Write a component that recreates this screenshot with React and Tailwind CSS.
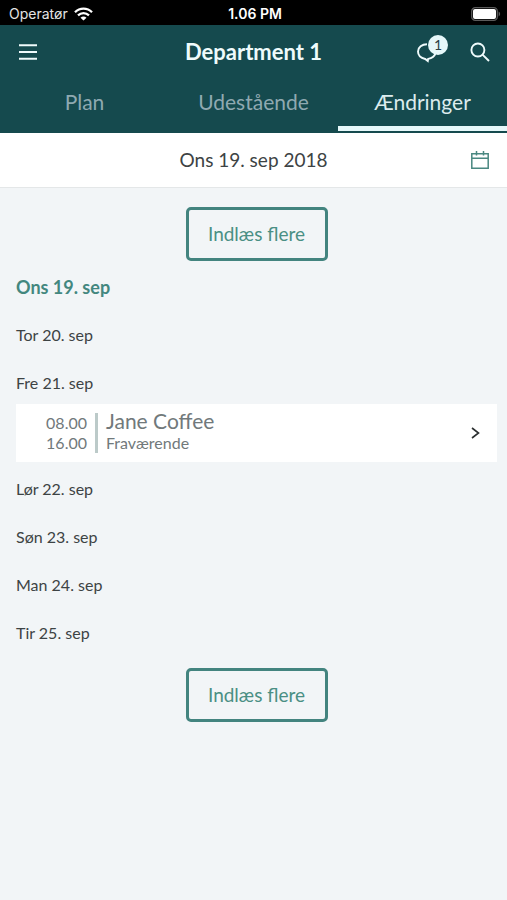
import React from "react";

const days = [
  { label: "Ons 19. sep", current: true },
  { label: "Tor 20. sep" },
  {
    label: "Fre 21. sep",
    shifts: [{ from: "08.00", to: "16.00", name: "Jane Coffee", status: "Fraværende" }],
  },
  { label: "Lør 22. sep" },
  { label: "Søn 23. sep" },
  { label: "Man 24. sep" },
  { label: "Tir 25. sep" },
];

const tabs = [{ label: "Plan" }, { label: "Udestående" }, { label: "Ændringer", active: true }];

function WifiIcon() {
  return (
    <svg width="19" height="14" viewBox="0 0 19 14" fill="none" stroke="#fff" strokeWidth="2.3" aria-hidden="true">
      <path d="M1 5.2C5.8.4 13.2.4 18 5.2" />
      <path d="M4 8.4c3.2-3 7.8-3 11 0" />
      <path d="M9.5 13.6 6.5 10.7c1.7-1.5 4.3-1.5 6 0Z" fill="#fff" stroke="none" />
    </svg>
  );
}

function BatteryIcon() {
  return (
    <svg width="30" height="14" viewBox="0 0 30 14" aria-hidden="true">
      <rect x="0.7" y="0.7" width="25.6" height="12.6" rx="3.6" fill="none" stroke="#5b5b5b" strokeWidth="1.3" />
      <rect x="2" y="2" width="23" height="10" rx="2" fill="#fff" />
      <path d="M27.6 4.6c2 .8 2 4 0 4.8Z" fill="#5b5b5b" />
    </svg>
  );
}

function StatusBar() {
  return (
    <div className="grid h-[25px] grid-cols-3 items-center bg-black pt-[2px] pr-[6px] pl-[9px] font-['Inter','Liberation_Sans',sans-serif] text-[14px] leading-5 text-white">
      <div className="flex items-center gap-[6px]">
        <span className="text-[#e4e4e4]">Operatør</span>
        <WifiIcon />
      </div>
      <span className="text-center font-semibold">1.06 PM</span>
      <span className="flex justify-end">
        <BatteryIcon />
      </span>
    </div>
  );
}

function LoadMore() {
  return (
    <button
      type="button"
      className="mx-auto block h-[54px] w-[142px] rounded-[5px] border-[3px] border-[#43847f] text-[19px] leading-6 text-[#4a8f84]"
    >
      Indlæs flere
    </button>
  );
}

function Shift({ shift }) {
  return (
    <button type="button" className="flex h-[58px] w-full items-center bg-white pr-4 text-left text-[#71797b]">
      <span className="w-[71px] text-right text-[16px] leading-5">
        <span className="block">{shift.from}</span>
        <span className="block">{shift.to}</span>
      </span>
      <span className="ml-2 h-10 w-[3px] bg-[#bccac9]" />
      <span className="ml-2 flex-1 pb-1">
        <span className="block text-[21px] leading-6">{shift.name}</span>
        <span className="block text-[16px] leading-5">{shift.status}</span>
      </span>
      <svg width="11" height="14" viewBox="0 0 11 14" fill="none" stroke="#2b2f30" strokeWidth="1.6" aria-hidden="true">
        <path d="M2 2l6.5 5L2 12" />
      </svg>
    </button>
  );
}

export default function App() {
  return (
    <div className="min-h-screen bg-[#f2f5f7] font-['Lato','Noto_Sans',sans-serif] text-[#3d4344]">
      <StatusBar />
      <header className="bg-[#154a4e] text-[#effbfc]">
        <div className="grid h-[53px] grid-cols-[1fr_auto_1fr] items-center px-[17px]">
          <button type="button" aria-label="Menu" className="justify-self-start">
            <svg width="22" height="18" viewBox="0 0 22 18" stroke="currentColor" strokeWidth="2.1" aria-hidden="true">
              <path d="M2 2.2h18M2 9h18M2 15.8h18" />
            </svg>
          </button>
          <h1 className="text-[22px] leading-7 font-bold">Department 1</h1>
          <div className="flex items-center justify-end gap-[22px]">
            <button type="button" aria-label="Beskeder" className="relative">
              <svg width="32" height="24" viewBox="0 0 32 24" fill="none" stroke="currentColor" strokeWidth="1.9" aria-hidden="true">
                <path d="M11 4.2C6 4.3 2 7.3 2 11.6c0 3.9 3.200 6.500 7.200 7.400l2.600 2.100.4-2.200c3.700-.6 6.300-2.600 7.300-5.500" />
              </svg>
              <span className="absolute -top-[5px] right-0 flex h-5 w-5 items-center justify-center rounded-full bg-[#e6f8fa] text-[14px] leading-5 text-[#2c4145]">
                1
              </span>
            </button>
            <button type="button" aria-label="Søg">
              <svg width="20" height="20" viewBox="0 0 20 20" fill="none" stroke="currentColor" strokeWidth="1.900" aria-hidden="true">
                <circle cx="7.900" cy="8" r="6.500" />
                <path d="M12.500 12.600 19 19" />
              </svg>
            </button>
          </div>
        </div>
        <nav className="grid h-[55px] grid-cols-3 border-b-2 border-[#154a4e]">
          {tabs.map((tab) => (
            <a
              key={tab.label}
              href="#"
              aria-current={tab.active ? "page" : undefined}
              className={
                tab.active
                  ? "border-b-[5px] border-[#e6f8fa] pt-[10px] text-center text-[21px] leading-7 text-[#dcecee]"
                  : "border-b-[5px] border-transparent pt-[10px] text-center text-[21px] leading-7 text-[#8fa9b1]"
              }
            >
              {tab.label}
            </a>
          ))}
        </nav>
      </header>
      <div className="grid h-[55px] grid-cols-[1fr_auto_1fr] items-center border-b border-[#e4e7e8] bg-white px-[17px]">
        <span className="col-start-2 text-[19px] leading-6">Ons 19. sep 2018</span>
        <button type="button" aria-label="Vælg dato" className="justify-self-end">
          <svg width="20" height="20" viewBox="0 0 20 20" fill="none" stroke="#4a8881" strokeWidth="1.500" aria-hidden="true">
            <path d="M1.800 3.800h16.400v14.400H1.800ZM1.800 8.200h16.400M6.500 1v4.600M13.500 1v4.600" />
          </svg>
        </button>
      </div>
      <main className="pt-[19px] pr-[10px] pl-4">
        <LoadMore />
        {days.map((day) => (
          <section key={day.label}>
            <h2
              className={
                day.current
                  ? "pt-[14px] pb-[9px] text-[18px] leading-6 font-bold text-[#43877f]"
                  : "pt-[15px] pb-[9px] text-[16px] leading-6"
              }
            >
              {day.label}
            </h2>
            {day.shifts?.map((shift) => (
              <Shift key={shift.from} shift={shift} />
            ))}
          </section>
        ))}
        <div className="pt-[14px]">
          <LoadMore />
        </div>
      </main>
    </div>
  );
}
